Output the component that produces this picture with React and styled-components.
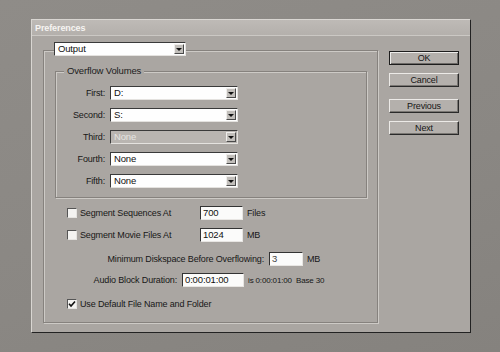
import React from 'react';
import styled, { createGlobalStyle } from 'styled-components';

// ** global */
const GlobalStyle = createGlobalStyle`
  html, body { margin: 0; padding: 0; background: #8b8884; }
  body {
    font-family: "Liberation Sans", Arial, sans-serif;
    font-size: 9px;
    letter-spacing: -0.15px;
    color: #171717;
  }
`;

// ** styled component */
const Page = styled.div`
  width: 500px;
  height: 352px;
  box-sizing: border-box;
  padding: 19px 0 0 31px;
  background: linear-gradient(160deg, #8f8c88 0%, #8a8783 60%, #85827e 100%);
`;

const Dialog = styled.div`
  width: 440px;
  height: 314px;
  box-sizing: border-box;
  background: #aaa6a2;
  border-top: 1px solid #d9d6d2;
  border-left: 1px solid #d9d6d2;
  border-right: 1px solid #222;
  border-bottom: 1px solid #222;
  display: flex;
  flex-direction: column;
`;

const TitleBar = styled.div`
  height: 15px;
  display: flex;
  align-items: center;
  padding-left: 3px;
  background: linear-gradient(#bebab6, #b4b0ac);
  border-bottom: 1px solid #cbc8c4;
  color: #f6f4f2;
  font-weight: bold;
  font-size: 9px;
  letter-spacing: -0.1px;
`;

const Body = styled.div`
  flex: 1;
  display: flex;
  gap: 11px;
  padding: 14px 0 0 11px;
`;

const Group = styled.div`
  width: 335px;
  height: 273px;
  box-sizing: border-box;
  border: 1px solid #86827e;
  box-shadow: inset 1px 1px 0 #cdcac6, 1px 1px 0 #cdcac6;
  display: flex;
  flex-direction: column;
  padding: 0 0 0 10px;
`;

const SubGroup = styled.div`
  width: 312px;
  box-sizing: border-box;
  margin: 15px 0 0 1px;
  border: 1px solid #86827e;
  box-shadow: inset 1px 1px 0 #cdcac6, 1px 1px 0 #cdcac6;
  padding: 0 0 9px 0;
  display: flex;
  flex-direction: column;
  gap: 8px;
`;

const Legend = styled.div`
  margin: -7px 0 0 8px;
  padding: 0 3px;
  align-self: flex-start;
  background: #aaa6a2;
  font-size: 9.5px;
  line-height: 12px;
  color: #1c1c1c;
`;

const Select = styled.div`
  width: ${p => p.w}px;
  height: 14px;
  box-sizing: border-box;
  display: flex;
  align-items: stretch;
  background: ${p => (p.disabled ? '#b9b5b1' : '#fefefe')};
  border-top: 1px solid #3a3a3a;
  border-left: 1px solid #3a3a3a;
  border-right: 1px solid #e4e2df;
  border-bottom: 1px solid #e4e2df;
  margin-top: ${p => p.mt || 0}px;
`;

const SelectText = styled.div`
  flex: 1;
  padding-left: 3px;
  line-height: 12px;
  font-size: 9.5px;
  color: ${p => (p.disabled ? '#e6e4e1' : '#111')};
`;

const Arrow = styled.div`
  width: 10px;
  margin: 1px 1px 1px 0;
  box-sizing: border-box;
  background: #c2bfbb;
  border-top: 1px solid #efedeb;
  border-left: 1px solid #efedeb;
  border-right: 1px solid #4a4a4a;
  border-bottom: 1px solid #4a4a4a;
  display: flex;
  align-items: center;
  justify-content: center;

  &::after {
    content: '';
    border-left: 3px solid transparent;
    border-right: 3px solid transparent;
    border-top: 3px solid #111;
    margin-top: 1px;
  }
`;

const VolRow = styled.div`
  display: flex;
  align-items: center;
  gap: 5px;
`;

const VolLabel = styled.div`
  width: 49px;
  text-align: right;
`;

const Options = styled.div`
  display: flex;
  flex-direction: column;
  padding-left: 13px;
  margin-top: 8px;
`;

const Row = styled.div`
  display: flex;
  align-items: center;
  height: 14px;
  margin-top: ${p => p.mt || 0}px;
`;

const Check = styled.div`
  width: 10px;
  height: 10px;
  box-sizing: border-box;
  background: #f4f3f1;
  border-top: 1px solid #555;
  border-left: 1px solid #555;
  border-right: 1px solid #e6e4e1;
  border-bottom: 1px solid #e6e4e1;
  display: flex;
  align-items: center;
  justify-content: center;
  margin-right: 3px;
`;

const CheckText = styled.div`
  width: ${p => p.w || 'auto'};
`;

const FieldLabel = styled.div`
  width: ${p => p.w}px;
  text-align: right;
  margin-right: 5px;
`;

const Input = styled.div`
  width: ${p => p.w}px;
  height: 14px;
  box-sizing: border-box;
  background: #fbfbfa;
  border-top: 1px solid #333;
  border-left: 1px solid #333;
  border-right: 1px solid #e8e6e3;
  border-bottom: 1px solid #e8e6e3;
  padding-left: 2px;
  line-height: 12px;
  font-size: 9.5px;
  color: ${p => (p.muted ? '#444' : '#111')};
`;

const Unit = styled.div`
  margin-left: ${p => p.ml || 4}px;
  font-size: ${p => p.fs || 9}px;
`;

const Buttons = styled.div`
  display: flex;
  flex-direction: column;
  padding-top: 1px;
`;

const Button = styled.div`
  width: 70px;
  height: 14px;
  box-sizing: border-box;
  background: #b4b0ac;
  margin-top: ${p => p.mt || 0}px;
  display: flex;
  align-items: center;
  justify-content: center;
  color: #161616;
  ${p => p.primary
    ? `border: 1px solid #1d1d1d; box-shadow: inset 1px 1px 0 #ecebe9, inset -1px -1px 0 #6d6a67;`
    : `border-top: 1px solid #eceae7; border-left: 1px solid #eceae7; border-right: 1px solid #2a2a2a; border-bottom: 1px solid #2a2a2a; box-shadow: inset -1px -1px 0 #7a7773;`}
`;

const volumes = [
  { label: 'First:', value: 'D:' },
  { label: 'Second:', value: 'S:' },
  { label: 'Third:', value: 'None', disabled: true },
  { label: 'Fourth:', value: 'None' },
  { label: 'Fifth:', value: 'None' },
];

const Tick = () => (
  <svg width="8" height="8" viewBox="0 0 8 8">
    <path d="M1 3.8 L3 6 L7 1.5" fill="none" stroke="#111" strokeWidth="1.6" />
  </svg>
);

const App = () => {
  return (
    <>
      <GlobalStyle />
      <Page>
        <Dialog>
          <TitleBar>Preferences</TitleBar>
          <Body>
            <Group>
              <Select w={132} mt={-9}>
                <SelectText>Output</SelectText>
                <Arrow />
              </Select>

              <SubGroup>
                <Legend>Overflow Volumes</Legend>
                {volumes.map((v, i) => (
                  <VolRow key={v.label} style={i === 0 ? { marginTop: 1 } : undefined}>
                    <VolLabel>{v.label}</VolLabel>
                    <Select w={128} disabled={v.disabled}>
                      <SelectText disabled={v.disabled}>{v.value}</SelectText>
                      <Arrow />
                    </Select>
                  </VolRow>
                ))}
              </SubGroup>

              <Options>
                <Row>
                  <Check />
                  <CheckText w="120px">Segment Sequences At</CheckText>
                  <Input w={43}>700</Input>
                  <Unit>Files</Unit>
                </Row>
                <Row mt={8}>
                  <Check />
                  <CheckText w="120px">Segment Movie Files At</CheckText>
                  <Input w={43}>1024</Input>
                  <Unit>MB</Unit>
                </Row>
                <Row mt={10}>
                  <FieldLabel w={197}>Minimum Diskspace Before Overflowing:</FieldLabel>
                  <Input w={34} muted>3</Input>
                  <Unit>MB</Unit>
                </Row>
                <Row mt={7}>
                  <FieldLabel w={110}>Audio Block Duration:</FieldLabel>
                  <Input w={62}>0:00:01:00</Input>
                  <Unit ml={4} fs={8}>is 0:00:01:00&nbsp; Base 30</Unit>
                </Row>
                <Row mt={10}>
                  <Check><Tick /></Check>
                  <CheckText>Use Default File Name and Folder</CheckText>
                </Row>
              </Options>
            </Group>

            <Buttons>
              <Button primary>OK</Button>
              <Button mt={8}>Cancel</Button>
              <Button mt={12}>Previous</Button>
              <Button mt={8}>Next</Button>
            </Buttons>
          </Body>
        </Dialog>
      </Page>
    </>
  );
};

export default App;
